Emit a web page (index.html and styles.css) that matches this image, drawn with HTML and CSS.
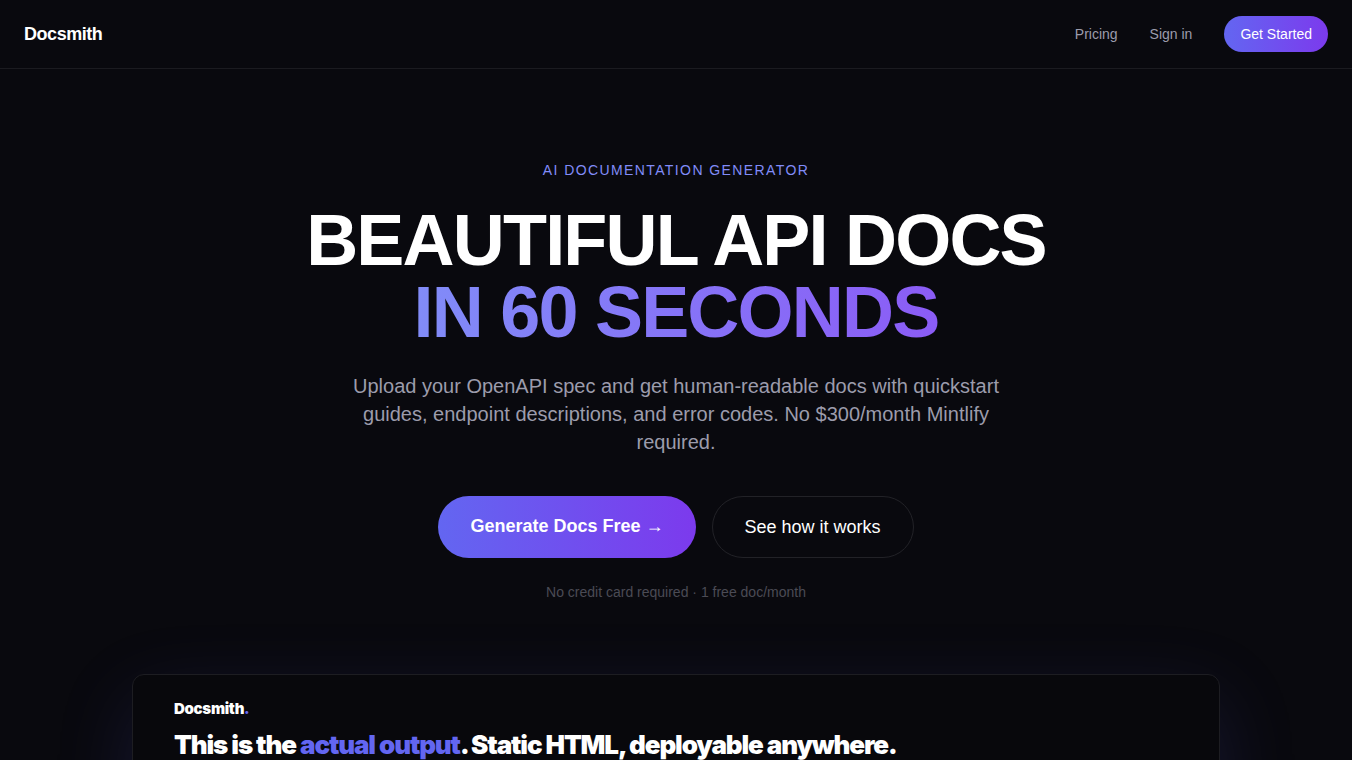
FILE: index.html
```html
<!DOCTYPE html>
<html lang="en">
<head>
<meta charset="utf-8">
<meta name="viewport" content="width=device-width, initial-scale=1">
<title>Docsmith</title>
<link rel="stylesheet" href="styles.css">
</head>
<body>
<header class="nav">
  <a class="brand" href="#">Docsmith</a>
  <nav class="nav-links">
    <a class="nav-link" href="#pricing">Pricing</a>
    <a class="nav-link" href="#signin">Sign in</a>
    <a class="nav-cta" href="#start">Get Started</a>
  </nav>
</header>
<main class="main">
  <section class="hero">
    <p class="eyebrow">AI Documentation Generator</p>
    <h1 class="title">Beautiful API docs<br><span class="title-accent">in 60 seconds</span></h1>
    <p class="lead">Upload your OpenAPI spec and get human-readable docs with quickstart guides, endpoint descriptions, and error codes. No $300/month Mintlify required.</p>
    <div class="actions">
      <a class="button primary" href="#start">Generate Docs Free <span class="arrow">→</span></a>
      <a class="button secondary" href="#how">See how it works</a>
    </div>
    <p class="note">No credit card required · 1 free doc/month</p>
  </section>
  <section class="preview">
    <p class="preview-brand">Docsmith<span class="dot">.</span></p>
    <h2 class="preview-title">This is the <span class="dot">actual output</span>. Static HTML, deployable anywhere.</h2>
  </section>
</main>
</body>
</html>
```
FILE: styles.css
```css
* { box-sizing: border-box; }
html { background: #09090e; }
body {
  margin: 0;
  height: 100vh;
  overflow: hidden;
  color: #fff;
  font-family: "Liberation Sans", Arial, sans-serif;
}
a { color: inherit; text-decoration: none; }
p, h1, h2 { margin: 0; }
.nav {
  display: flex;
  align-items: center;
  justify-content: space-between;
  padding: 16px 24px;
  border-bottom: 1px solid #1b1b20;
}
.brand { font-size: 18px; line-height: 28px; font-weight: 700; letter-spacing: -0.025em; }
.nav-links { display: flex; align-items: center; gap: 32px; font-size: 14px; line-height: 20px; }
.nav-link { color: #9c9cac; }
.nav-cta {
  padding: 8px 16px;
  border-radius: 18px;
  background: linear-gradient(90deg, #6366f1, #7c3aed);
}
.hero {
  display: flex;
  flex-direction: column;
  align-items: center;
  max-width: 896px;
  margin: 0 auto;
  padding: 91px 24px 72px;
  text-align: center;
}
.eyebrow {
  color: #818cf8;
  font-size: 14px;
  line-height: 20px;
  letter-spacing: 0.1em;
  text-transform: uppercase;
}
.title {
  margin-top: 24px;
  font-size: 72px;
  line-height: 72px;
  font-weight: 700;
  letter-spacing: -0.025em;
  text-transform: uppercase;
}
.title-accent {
  background: linear-gradient(90deg, #818cf8, #8b5cf6);
  background-clip: text;
  -webkit-background-clip: text;
  color: transparent;
}
.lead { max-width: 672px; margin-top: 24px; color: #9c9cac; font-size: 20px; line-height: 28px; }
.actions { display: flex; justify-content: center; gap: 16px; margin-top: 40px; }
.button { padding: 16px 32px; border-radius: 31px; font-size: 18px; line-height: 28px; }
.primary { background: linear-gradient(90deg, #6366f1, #7c3aed); font-weight: 700; }
.arrow { font-family: "Liberation Serif", serif; font-weight: 400; line-height: 1; }
.secondary { border: 1px solid #222227; }
.note { margin-top: 24px; color: #4b4b55; font-size: 14px; line-height: 20px; }
.preview {
  width: calc(100% - 264px);
  max-width: 1088px;
  height: 600px;
  margin: 0 auto;
  padding: 24px 41px;
  border: 1px solid #1d1d22;
  border-radius: 12px;
  background: #08080c;
  box-shadow: 0 25px 80px rgba(99, 102, 241, 0.15);
  font-family: Inter, "Liberation Sans", sans-serif;
}
.preview-brand { font-size: 15px; line-height: 20px; font-weight: 900; letter-spacing: -0.02em; }
.preview-title { margin-top: 10px; font-size: 26px; line-height: 32px; font-weight: 900; letter-spacing: -0.043em; }
.dot { color: #6366f1; }
```
